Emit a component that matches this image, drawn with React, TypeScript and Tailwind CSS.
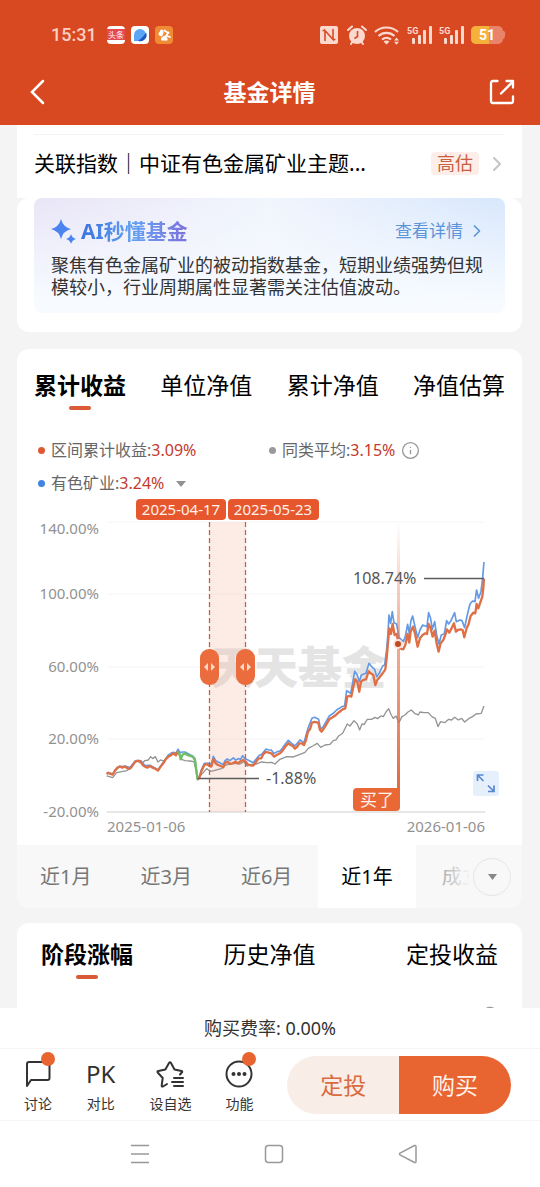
import { ChevronRight, CircleHelp, Info } from "lucide-react";

const chartTabs = ["累计收益", "单位净值", "累计净值", "净值估算"];
const periods = ["近1月", "近3月", "近6月", "近1年", "成立以来"];
const detailTabs = ["阶段涨幅", "历史净值", "定投收益"];

// Series are stored in thirds of a chart unit, see the scale on their group.
const fundStart =
  "320,822 325,818 332,822 338,824 345,812 352,804 360,799 367,803 375,800 383,805 390,806 398,796 405,786 413,782 422,785 428,795 435,800 442,803 450,798 458,803 465,806 474,812 482,800 490,790 497,778 505,770 513,766 520,760 528,766 534,754";
const fundDrop =
  "534,754 538,760 542,778 548,764 555,760 562,765 570,768 578,770 585,780 589,812 593,838";
const fundRise =
  "593,838 598,833 605,812 613,795 620,792 627,797 634,800 640,778 647,790 654,795 662,798 670,802 675,790 682,785 690,792 698,790 706,785 714,790 722,784 730,780 738,786 744,794 752,796 760,797 768,786 776,775 784,775 790,762 798,756 806,758 814,760 822,770 830,765 840,760 848,752 856,740 865,730 872,735 878,738 885,746 892,740 898,730 905,730 912,735 918,720 924,695 930,688 936,668 944,666 955,668 960,690 965,695 972,685 980,672 988,658 998,652 1008,645 1018,636 1028,628 1036,625 1042,590 1048,588 1054,590 1060,560 1066,538 1072,545 1078,575 1083,545 1090,540 1098,538 1106,514 1112,520 1120,525 1126,555 1132,540 1140,530 1148,520 1156,508 1160,475 1164,430 1168,385 1173,402 1178,372 1184,405 1190,402 1196,432 1200,445 1210,448 1216,435 1223,402 1228,428 1232,395 1239,380 1245,400 1253,440 1260,415 1268,405 1276,400 1281,402 1286,372 1292,385 1298,410 1304,392 1310,430 1316,455 1322,430 1330,420 1336,405 1341,388 1348,398 1355,385 1362,370 1368,395 1374,390 1382,388 1388,390 1393,412 1400,385 1406,372 1412,348 1420,338 1426,340 1430,312 1435,325 1442,305 1447,290 1450,265 1452,236";
const index =
  "320,820 332,820 338,822 352,802 375,798 390,803 405,784 422,782 435,797 450,796 474,809 490,787 505,765 520,757 528,760 534,748 541,758 548,756 555,756 570,764 578,768 585,776 589,806 593,835 598,830 605,808 613,790 627,790 634,794 640,769 647,782 662,790 670,794 675,782 682,777 690,782 700,774 707,780 715,776 722,778 728,767 735,776 744,780 760,788 768,778 776,768 786,762 792,755 798,747 806,750 814,750 822,761 832,755 840,753 848,744 856,732 865,721 875,730 885,738 900,720 912,728 924,685 936,655 944,652 956,658 962,688 970,680 988,648 1000,640 1010,630 1026,620 1034,618 1040,572 1052,580 1058,550 1064,514 1072,525 1078,545 1084,525 1098,520 1107,490 1115,500 1124,508 1130,530 1138,520 1148,498 1154,495 1160,450 1164,400 1167,345 1172,370 1177,335 1182,368 1190,372 1197,412 1210,425 1216,410 1223,373 1228,400 1233,362 1238,348 1244,375 1253,413 1260,390 1268,375 1276,378 1281,380 1286,338 1292,355 1297,388 1304,365 1310,405 1317,432 1324,405 1333,402 1340,362 1346,372 1353,362 1364,338 1369,365 1380,360 1386,362 1394,383 1402,345 1410,312 1418,303 1425,305 1430,270 1436,295 1443,275 1448,235 1452,186";
const average =
  "320,828 338,833 350,818 365,815 380,812 395,803 405,783 415,785 425,790 435,782 445,780 452,770 458,776 466,770 474,786 482,780 490,783 498,778 506,768 515,758 525,765 534,758 545,778 555,782 570,783 582,785 588,810 592,840 600,828 610,818 620,806 632,814 642,812 655,808 665,806 675,796 690,792 705,790 720,792 732,785 742,798 755,793 770,792 785,786 800,788 815,787 825,792 840,778 860,770 880,771 900,763 915,757 925,745 938,738 952,730 962,742 975,735 990,733 1000,722 1008,720 1016,708 1028,700 1042,672 1050,678 1062,662 1072,672 1079,690 1086,672 1092,674 1102,658 1115,658 1125,652 1133,656 1143,648 1150,650 1158,636 1166,626 1174,645 1180,655 1188,648 1197,668 1206,650 1215,645 1224,636 1234,630 1244,640 1255,645 1260,636 1272,638 1285,638 1296,650 1306,655 1314,680 1322,665 1334,668 1346,658 1355,660 1364,652 1375,660 1385,655 1394,666 1406,656 1418,650 1428,642 1444,640 1452,618";

const yLabels = [
  { text: "140.00%", line: 22, label: 34 },
  { text: "100.00%", line: 94, label: 99 },
  { text: "60.00%", line: 167, label: 172 },
  { text: "20.00%", line: 239, label: 244 },
  { text: "-20.00%", line: 312, label: 317 },
];

function Signal() {
  return (
    <svg width="25" height="20" viewBox="0 0 25 20" fill="#fbd9cf">
      <text x="0" y="9" fontSize="9" fontWeight="700" fontFamily="Roboto">5G</text>
      <rect x="5" y="13" width="3" height="6" rx="1" />
      <rect x="11" y="10" width="3" height="9" rx="1" />
      <rect x="16" y="5" width="3" height="14" rx="1" />
      <rect x="22" y="1" width="3" height="18" rx="1" />
    </svg>
  );
}

function StatusBar() {
  return (
    <div className="flex h-[70px] items-center pl-[51px] pr-[34px]">
      <span className="font-['Roboto'] text-lg font-medium text-[#fbd0c2]">15:31</span>
      <div className="ml-2.5 flex gap-1.5">
        <svg width="18" height="18" viewBox="0 0 18 18">
          <rect width="18" height="18" rx="4" fill="#fff" />
          <rect y="3" width="18" height="11" fill="#e5484d" />
          <text x="9" y="12" fontSize="8" textAnchor="middle" fill="#fff">头条</text>
        </svg>
        <svg width="18" height="18" viewBox="0 0 18 18">
          <rect width="18" height="18" rx="4" fill="#fff" />
          <path d="M3 15V9a6 6 0 1 1 6 6Z" fill="#5aa5f5" />
          <path d="M15 6.500a6.200 6.200 0 0 1-8 8.300C10 13 13 10 15 6.500Z" fill="#1c58c4" />
        </svg>
        <svg width="18" height="18" viewBox="0 0 18 18">
          <rect width="18" height="18" rx="4" fill="#f08a35" />
          <path d="M6.500 3.500q2.500 0 2 3.500l-1.500 3.500q-4-1-3.500-3 .2-1.500 1.300-1.500 0-2.300 1.700-2.500Z" fill="#fff" />
          <path d="M9.500 4.500l3 2M13.500 6.500l-2.500 3.500M12 10l3 1" fill="none" stroke="#fff" strokeWidth="1.800" strokeLinecap="round" />
          <path d="M6.500 14.500q-1.500-2.500 1-3.500l2-1.500 2.500 2q1.500 1.500 0 3.300Z" fill="#fff" />
        </svg>
      </div>
      <div className="ml-auto flex items-center gap-[7px]">
        <svg width="18" height="18" viewBox="0 0 18 18">
          <rect width="18" height="18" rx="2" fill="#fbd9cf" />
          <path d="M5 15V4.500l8 9V3M5 4.500H2.500M13 13.500h2.500" fill="none" stroke="#d84922" strokeWidth="1.600" />
        </svg>
        <svg className="ml-0.5" width="20" height="20" viewBox="0 0 20 20">
          <circle cx="10" cy="11" r="8" fill="#fbd9cf" />
          <path d="M1 5l4-3.500M19 5l-4-3.500M4 19l2-3M16 19l-2-3" stroke="#fbd9cf" strokeWidth="2" strokeLinecap="round" />
          <path d="M10.500 6v5.500l-3 2" fill="none" stroke="#d84922" strokeWidth="1.600" />
        </svg>
        <svg width="26" height="20" viewBox="0 0 26 20">
          <path d="M1 7a17 17 0 0 1 23 0M4.500 11a12 12 0 0 1 16 0M8 14.500a7 7 0 0 1 9 0" fill="none" stroke="#fbd9cf" strokeWidth="2.200" />
          <path d="M9.500 16.500a5 5 0 0 1 6 0l-3 3ZM20 15.500l2.500-3 2.500 3ZM20 16.700h5l-2.500 3Z" fill="#fbd9cf" />
        </svg>
        <Signal />
        <Signal />
        <svg width="35" height="18" viewBox="0 0 35 18">
          <rect width="32" height="18" rx="5" fill="#e9846a" />
          <path d="M18 0H5a5 5 0 0 0-5 5v8a5 5 0 0 0 5 5h13Z" fill="#f6b13d" />
          <path d="M32 5q3 0 2 4 0 4-2 4Z" fill="#e9846a" />
          <text x="16" y="14" fontSize="14" fontWeight="700" textAnchor="middle" fill="#fff" fontFamily="Roboto">51</text>
        </svg>
      </div>
    </div>
  );
}

function YieldChart() {
  return (
    <svg viewBox="17 -3 505 348" className="-mt-[3px] block w-full" fontSize="15" fill="#929292">
      {yLabels.map((y) => (
        <g key={y.text}>
          <path d={`M107 ${y.line}H485`} stroke={y.line === 312 ? "#e6e6e6" : "#f5f5f5"} strokeWidth={y.line === 312 ? 2 : 1} />
          <text x="99" y={y.label} textAnchor="end">{y.text}</text>
        </g>
      ))}
      <text x="107" y="332">2025-01-06</text>
      <text x="485" y="332" textAnchor="end">2026-01-06</text>
      <text x="298" y="184" fontSize="44" fontWeight="900" textAnchor="middle" fill="#e4e4e4">天天基金</text>

      <rect x="209" y="22" width="37" height="290" fill="#f5b9a0" fillOpacity="0.28" />
      <g transform="scale(0.3333)" fill="none" strokeLinejoin="round">
        <polyline points={average} stroke="#949494" strokeWidth="4" />
        <polyline points={index} stroke="#6499e6" strokeWidth="5" />
        <polyline points={fundStart} stroke="#df6f45" strokeWidth="7" />
        <polyline points={fundDrop} stroke="#72bd63" strokeWidth="7" />
        <polyline points={fundRise} stroke="#df6f45" strokeWidth="7" />
      </g>
      <path d="M209.500 22V312M245.500 22V312" stroke="#d0603c" strokeWidth="1.300" strokeDasharray="5 3" />
      {[209, 245].map((x) => (
        <g key={x}>
          <rect x={x - 9} y="149" width="19" height="36" rx="9" fill="#eb6d3d" />
          <path d={`M${x - 1} 163v8l-4-4ZM${x + 2} 163v8l4-4Z`} fill="#fbd8c8" />
        </g>
      ))}

      <rect x="136" y="-1" width="90" height="21" rx="4" fill="#e6572e" />
      <rect x="228" y="-1" width="91" height="21" rx="4" fill="#e6572e" />
      <g fill="#fff1ea" textAnchor="middle">
        <text x="181" y="15">2025-04-17</text>
        <text x="273" y="15">2025-05-23</text>
      </g>

      <defs>
        <linearGradient id="buyLine" x1="0" y1="0" x2="0" y2="1">
          <stop offset="0" stopColor="#e8744e" stopOpacity="0" />
          <stop offset="0.35" stopColor="#e8744e" stopOpacity="0.5" />
          <stop offset="1" stopColor="#e2693f" />
        </linearGradient>
      </defs>
      <rect x="397" y="22" width="3" height="268" fill="url(#buyLine)" />
      <path d="M357 288H400V307a4 4 0 0 1-4 4H357a4 4 0 0 1-4-4V292a4 4 0 0 1 4-4Z" fill="#ea6736" />
      <text x="377" y="306" fontSize="17" textAnchor="middle" fill="#fff1ea">买了</text>
      <circle cx="398" cy="144" r="4" fill="#c04a22" stroke="#fbe3da" strokeWidth="2" />

      <path d="M424 78.500H484M198 278.500H259" stroke="#5c5c5c" strokeWidth="1.500" />
      <g fontSize="16" fill="#555">
        <text x="353" y="84">108.74%</text>
        <text x="266" y="284">-1.88%</text>
      </g>

      <rect x="473" y="271" width="26" height="25" rx="3" fill="#e6f0fd" />
      <path d="M477.500 281v-6h6M477.500 275l6 6M488 291.500h6v-6M494 291.500l-6-6" fill="none" stroke="#5687d0" strokeWidth="1.700" />
    </svg>
  );
}

function Legend({ dot, label, value }: { dot: string; label: string; value: string }) {
  return (
    <span className="flex items-center">
      <span className={`mr-1.5 size-[7px] rounded-full ${dot}`} />
      <span className="text-[#666]">{label}:</span>
      <span className="text-[#c4392b]">{value}</span>
    </span>
  );
}

function Tabs({ items }: { items: string[] }) {
  return (
    <div className="flex justify-between">
      {items.map((item, i) => (
        <button key={item} className="flex flex-col items-center">
          <span className={`text-[23px] leading-[30px] text-black ${i === 0 ? "font-bold" : ""}`}>{item}</span>
          {i === 0 && <span className="mt-1.5 h-1 w-[22px] rounded-full bg-[#d85a36]" />}
        </button>
      ))}
    </div>
  );
}

function ActionBar() {
  return (
    <div className="flex h-[72px] items-center border-t border-[#f4f4f4] pl-6 pr-[29px] text-sm leading-5 text-[#333]">
      <div className="flex gap-[34px] pt-1">
        <button className="relative flex flex-col items-center gap-1.5">
          <svg width="28" height="28" viewBox="0 0 28 28" fill="none" stroke="#333" strokeWidth="2">
            <path d="M3 26V4a2 2 0 0 1 2-2h19a1.500 1.500 0 0 1 1.500 1.500V18a2 2 0 0 1-2 2H7Z" strokeLinejoin="round" />
          </svg>
          <span>讨论</span>
          <span className="absolute -top-2 left-[17px] size-3.5 rounded-full bg-[#e86431]" />
        </button>
        <button className="flex flex-col items-center gap-1.5">
          <span className="text-2xl leading-7">PK</span>
          <span>对比</span>
        </button>
        <button className="flex flex-col items-center gap-1.5">
          <svg width="30" height="28" viewBox="0 0 30 28" fill="none" stroke="#333" strokeWidth="2" strokeLinecap="round" strokeLinejoin="round">
            <path d="M12 24l-4 2.500q-1.500.5-1.300-1l1-7.500-5-5.500q-.8-1.300.7-1.500l7-1.500L14 3q1-1.500 2 0l3.500 6.500 7 1.500q1.300.5.3 1.500L25 14.500" />
            <path d="M19 18h9M17 22h11M19 26h9" />
          </svg>
          <span>设自选</span>
        </button>
        <button className="relative flex flex-col items-center gap-1.5">
          <svg width="28" height="28" viewBox="0 0 28 28">
            <circle cx="14" cy="14" r="12.500" fill="none" stroke="#333" strokeWidth="2" />
            <circle cx="8.500" cy="14" r="2" fill="#333" />
            <circle cx="14" cy="14" r="2" fill="#333" />
            <circle cx="19.500" cy="14" r="2" fill="#333" />
          </svg>
          <span>功能</span>
          <span className="absolute -top-2 left-[17px] size-3.5 rounded-full bg-[#e86431]" />
        </button>
      </div>
      <div className="ml-[34px] flex h-[58px] flex-1 overflow-hidden rounded-full text-[23px]">
        <button className="flex-1 bg-[#f9ede8] text-[#d96b40]">定投</button>
        <button className="flex-1 bg-[#e86431] text-[#fff3ea]">购买</button>
      </div>
    </div>
  );
}

export default function App() {
  return (
    <div className="flex h-screen flex-col bg-[#f4f4f4] font-['Noto_Sans','Noto_Sans_CJK_SC',sans-serif]">
      <header className="shrink-0 bg-[#d84922] pb-[11px] text-white">
        <StatusBar />
        <div className="flex h-11 items-center justify-between pr-[25px] pl-[30px]">
          <button aria-label="返回">
            <svg width="20" height="26" viewBox="0 0 20 26" fill="none" stroke="#fff" strokeWidth="2.500" strokeLinecap="round">
              <path d="M13 2L2 13l11 11" />
            </svg>
          </button>
          <h1 className="text-[23px] font-bold">基金详情</h1>
          <button aria-label="分享">
            <svg width="26" height="26" viewBox="0 0 26 26" fill="none" stroke="#fff" strokeWidth="2.300" strokeLinecap="round" strokeLinejoin="round">
              <path d="M8.500 2H4Q2 2 2 4v18q0 2 2 2h18q2 0 2-2v-4.500M12 14.500L24 2.500M17.500 2H24v6.500" />
            </svg>
          </button>
        </div>
      </header>

      <main className="min-h-0 flex-1 overflow-y-auto pr-[18px] pl-[17px] [scrollbar-width:none]">
        <section className="bg-white px-[17px] pt-[9px]">
          <a href="#index" className="flex h-16 items-center border-t border-[#f4f4f4] pb-1.5">
            <span className="text-[21px] text-black">关联指数｜中证有色金属矿业主题...</span>
            <span className="ml-auto rounded-sm bg-[#fdeee9] px-1.5 text-lg leading-[23px] text-[#c9603f]">高估</span>
            <ChevronRight className="-mr-1 ml-1.5 size-6 text-[#c4c4c4]" />
          </a>
        </section>

        <section className="rounded-xl bg-white px-[17px] pb-[19px]">
          <div className="rounded-lg bg-[linear-gradient(to_bottom,transparent,#f7fbff_90%),linear-gradient(to_right,#e9e5f7,#f1f5fd_50%,#d8e7fc)] pt-[19px] pr-3 pb-[15px] pl-[17px]">
            <div className="flex items-center">
              <svg width="26" height="26" viewBox="0 0 26 26" fill="#4b84ee">
                <path d="M10 1q2 8 10 10-8 2-10 10Q8 13 0 11 8 9 10 1ZM20 16q1 4 5 5-4 1-5 5-1-4-5-5 4-1 5-5Z" />
              </svg>
              <h2 className="ml-1 bg-linear-to-r from-[#3c74dc] via-[#62a0f2] to-[#7c70dc] bg-clip-text text-[21px] leading-7 font-bold text-transparent">
                AI秒懂基金
              </h2>
              <a href="#ai" className="ml-auto flex items-center text-[17px] text-[#5b94d8]">
                查看详情
                <ChevronRight className="mr-1.5 ml-1 size-5" />
              </a>
            </div>
            <p className="mt-[9px] text-lg leading-[22px] text-[#333]">
              聚焦有色金属矿业的被动指数基金，短期业绩强势但规模较小，行业周期属性显著需关注估值波动。
            </p>
          </div>
        </section>

        <section className="mt-[17px] overflow-hidden rounded-xl bg-white">
          <div className="px-[17px] pt-[21px]">
            <Tabs items={chartTabs} />
          </div>
          <div className="mt-6 grid grid-cols-[231px_1fr] pl-[21px] text-base leading-[33px]">
            <Legend dot="bg-[#dd5a32]" label="区间累计收益" value="3.09%" />
            <div className="flex items-center">
              <Legend dot="bg-[#999]" label="同类平均" value="3.15%" />
              <Info className="ml-1.5 size-[19px] text-[#999]" strokeWidth={1.7} />
            </div>
            <button className="flex items-center">
              <Legend dot="bg-[#4285e0]" label="有色矿业" value="3.24%" />
              <svg className="ml-3" width="10" height="6" viewBox="0 0 10 6" fill="#929292">
                <path d="M0 0h10L5 6Z" />
              </svg>
            </button>
          </div>
          <YieldChart />
          <div className="relative flex h-[63px] gap-[3px] overflow-hidden bg-[#f8f8f8] text-xl">
            {periods.map((period) => (
              <button
                key={period}
                className={`shrink-0 px-[23px] ${period === "近1年" ? "bg-white text-black" : "text-[#777]"}`}
              >
                {period}
              </button>
            ))}
            <div className="absolute inset-y-0 right-0 flex w-[86px] items-center justify-end bg-linear-to-r from-[#f8f8f8]/30 to-[#f8f8f8] to-40% pr-[11px]">
              <button aria-label="更多" className="flex size-[38px] items-center justify-center rounded-full border border-[#e6e6e6] bg-[#f8f8f8]">
                <svg width="9" height="6" viewBox="0 0 9 6" fill="#888">
                  <path d="M0 0h9L4.500 6Z" />
                </svg>
              </button>
            </div>
          </div>
        </section>

        <section className="mt-[15px] rounded-t-xl bg-white px-6 pt-4 pb-5">
          <Tabs items={detailTabs} />
          <CircleHelp className="mt-[27px] ml-auto size-4 text-[#999]" />
        </section>
      </main>

      <footer className="shrink-0 bg-white">
        <p className="h-10 text-center text-lg leading-10 text-[#333]">购买费率: 0.00%</p>
        <ActionBar />
        <nav className="flex h-[67px] items-center justify-center gap-[114px] border-t border-[#f4f4f4] pl-2">
          <button aria-label="最近任务">
            <svg width="20" height="20" viewBox="0 0 20 20" stroke="#999" strokeWidth="1.500">
              <path d="M1 1.500h18M1 10h18M1 18.500h18" />
            </svg>
          </button>
          <button aria-label="主屏幕">
            <svg width="20" height="20" viewBox="0 0 20 20" fill="none" stroke="#999" strokeWidth="1.500">
              <rect x="1.500" y="1.500" width="17" height="17" rx="3" />
            </svg>
          </button>
          <button aria-label="后退">
            <svg width="20" height="20" viewBox="0 0 20 20" fill="none" stroke="#999" strokeWidth="1.500">
              <path d="M2 9.200L16.500 1.500q1.500-.5 1.500 1v15q0 1.500-1.500 1L2 10.800q-1-.8 0-1.600Z" />
            </svg>
          </button>
        </nav>
      </footer>
    </div>
  );
}
